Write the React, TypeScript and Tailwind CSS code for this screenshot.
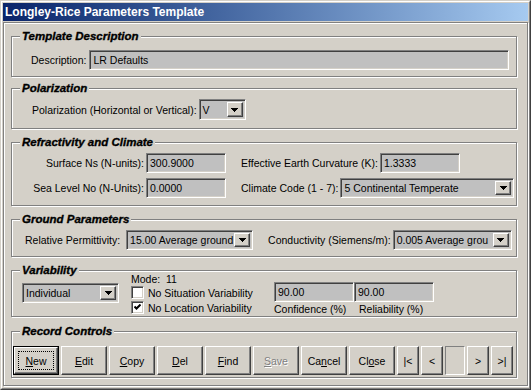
import React from "react";

const sunken =
  "border border-t-[#808080] border-l-[#808080] border-b-white border-r-white shadow-[inset_1px_1px_0_#404040,inset_-1px_-1px_0_#d4d0c8]";
const raised =
  "border border-t-white border-l-white border-b-[#404040] border-r-[#404040] shadow-[inset_-1px_-1px_0_#808080]";

function Field({ value, className }: { value: string; className: string }) {
  return (
    <div className={`${sunken} bg-[#c0c0c0] flex items-center pl-[3px] whitespace-nowrap overflow-hidden shrink-0 ${className}`}>
      {value}
    </div>
  );
}

function Arrow() {
  return (
    <svg width="7" height="4" viewBox="0 0 7 4" shapeRendering="crispEdges">
      <polygon points="0,0 7,0 3.5,4" fill="#000" />
    </svg>
  );
}

function Select({ value, className }: { value: string; className: string }) {
  return (
    <div className={`${sunken} bg-[#c0c0c0] flex items-center p-[2px] shrink-0 ${className}`}>
      <span className="flex-1 pl-[1px] whitespace-nowrap overflow-hidden">{value}</span>
      <span className={`${raised} bg-[#d4d0c8] w-[16px] h-full flex items-center justify-center`}>
        <Arrow />
      </span>
    </div>
  );
}

function Check({ checked }: { checked?: boolean }) {
  return (
    <span className={`${sunken} bg-white w-[13px] h-[13px] flex items-center justify-center shrink-0`}>
      {checked && (
        <svg width="7" height="7" viewBox="0 0 7 7">
          <polyline points="0.5,2.5 2.5,4.5 6.5,0.5" fill="none" stroke="#000" strokeWidth="2" />
        </svg>
      )}
    </span>
  );
}

function Group({
  title,
  className,
  children,
}: {
  title: string;
  className: string;
  children: React.ReactNode;
}) {
  return (
    <div
      className={`relative ml-[7px] w-[506px] shrink-0 border border-[#808080] shadow-[inset_1px_1px_0_#fff,1px_1px_0_#fff] ${className}`}
    >
      <span className="absolute left-[8px] -top-[8px] bg-[#d4d0c8] px-[2px] font-bold italic text-[11.5px] leading-[14px] [-webkit-text-stroke:0.35px_#000]">
        {title}
      </span>
      {children}
    </div>
  );
}

function Btn({
  children,
  className,
  def,
  disabled,
}: {
  children: React.ReactNode;
  className: string;
  def?: boolean;
  disabled?: boolean;
}) {
  const text = disabled
    ? "text-[#808080] [text-shadow:1px_1px_0_#fff]"
    : "text-black";
  if (def) {
    return (
      <div className={`border border-black h-[29px] ${className}`}>
        <div className={`${raised} bg-[#d4d0c8] w-full h-full flex items-center justify-center p-[3px]`}>
          <div className="w-full h-full border border-dotted border-black flex items-center justify-center">
            <span className={text}>{children}</span>
          </div>
        </div>
      </div>
    );
  }
  return (
    <div className={`${raised} bg-[#d4d0c8] h-[29px] flex items-center justify-center ${className}`}>
      <span className={text}>{children}</span>
    </div>
  );
}

export default function App() {
  return (
    <div className="w-[531px] h-[390px] bg-[#d4d0c8] border border-t-[#d4d0c8] border-l-[#d4d0c8] border-b-[#404040] border-r-[#404040] font-['Liberation_Sans',Arial,sans-serif] text-[10.5px] text-black leading-[12px] whitespace-nowrap select-none">
      <div className="h-full border border-t-white border-l-white border-b-[#808080] border-r-[#808080] p-[1px] flex flex-col">
        <div className="h-[18px] shrink-0 bg-gradient-to-r from-[#0a246a] to-[#a6caf0] flex items-center pl-[2px]">
          <span className="text-white font-bold text-[12px] leading-[14px]">Longley-Rice Parameters Template</span>
        </div>
        <div className="flex-1 mt-[1px] mb-[1px] border border-[#808080] shadow-[inset_1px_1px_0_#fff,1px_1px_0_#fff] flex flex-col">
          <Group title="Template Description" className="mt-[13px] h-[41px]">
            <div className="flex items-center pt-[13px] pl-[19px]">
              <span className="mr-[3px]">Description:</span>
              <Field value="LR Defaults" className="h-[20px] w-[420px]" />
            </div>
          </Group>

          <Group title="Polarization" className="mt-[11px] h-[41px]">
            <div className="flex items-center pt-[10px] pl-[20px]">
              <span className="mr-[2px]">Polarization (Horizontal or Vertical):</span>
              <Select value="V" className="h-[21px] w-[47px]" />
            </div>
          </Group>

          <Group title="Refractivity and Climate" className="mt-[13px] h-[64px]">
            <div className="flex items-center pt-[10px]">
              <span className="w-[132px] shrink-0 text-right mr-[2px]">Surface Ns (N-units):</span>
              <Field value="300.9000" className="h-[20px] w-[80px]" />
              <span className="ml-[15px] mr-[2px]">Effective Earth Curvature (K):</span>
              <Field value="1.3333" className="h-[20px] w-[80px]" />
            </div>
            <div className="flex items-center mt-[5px]">
              <span className="w-[132px] shrink-0 text-right mr-[2px]">Sea Level No (N-Units):</span>
              <Field value="0.0000" className="h-[20px] w-[80px]" />
              <span className="ml-[15px] mr-[2px]">Climate Code (1 - 7):</span>
              <Select value="5 Continental Temperate" className="h-[20px] w-[174px]" />
            </div>
          </Group>

          <Group title="Ground Parameters" className="mt-[13px] h-[38px]">
            <div className="flex items-center pt-[10px] pl-[13px]">
              <span className="mr-[6px]">Relative Permittivity:</span>
              <Select value="15.00 Average ground" className="h-[20px] w-[127px]" />
              <span className="ml-[15px] mr-[2px]">Conductivity (Siemens/m):</span>
              <Select value="0.005 Average grou" className="h-[20px] w-[119px]" />
            </div>
          </Group>

          <Group title="Variability" className="mt-[13px] h-[47px]">
            <div className="flex">
              <Select value="Individual" className="ml-[10px] mt-[12px] w-[97px] h-[20px]" />
              <div className="ml-[12px] w-[143px] shrink-0 flex flex-col">
                <div className="h-[14px] leading-[14px] pt-[1px]">Mode:&nbsp;&nbsp;11</div>
                <div className="flex items-center h-[15px] gap-[4px]">
                  <Check />
                  <span>No Situation Variability</span>
                </div>
                <div className="flex items-center h-[15px] gap-[4px]">
                  <Check checked />
                  <span>No Location Variability</span>
                </div>
              </div>
              <div className="mt-[11px] flex flex-col">
                <div className="flex">
                  <Field value="90.00" className="h-[20px] w-[80px]" />
                  <Field value="90.00" className="h-[20px] w-[80px]" />
                </div>
                <div className="flex leading-[12px] mt-[1px]">
                  <span className="w-[85px]">Confidence (%)</span>
                  <span>Reliability (%)</span>
                </div>
              </div>
            </div>
          </Group>

          <Group title="Record Controls" className="mt-[14px] h-[47px]">
            <div className="flex items-center gap-[2px] pt-[14px] pl-[1px]">
              <Btn def className="w-[46px]"><u>N</u>ew</Btn>
              <Btn className="w-[46px]"><u>E</u>dit</Btn>
              <Btn className="w-[46px]"><u>C</u>opy</Btn>
              <Btn className="w-[46px]"><u>D</u>el</Btn>
              <Btn className="w-[46px]"><u>F</u>ind</Btn>
              <Btn disabled className="w-[46px]"><u>S</u>ave</Btn>
              <Btn className="w-[46px]">Ca<u>n</u>cel</Btn>
              <Btn className="w-[46px]">Cl<u>o</u>se</Btn>
              <Btn className="w-[22px]">|&lt;</Btn>
              <Btn className="w-[22px]">&lt;</Btn>
              <div className="w-[20px] h-[29px] border border-t-[#808080] border-l-[#808080] border-b-white border-r-white bg-[#d4d0c8]" />
              <Btn className="w-[22px]">&gt;</Btn>
              <Btn className="w-[22px]">&gt;|</Btn>
            </div>
          </Group>
        </div>
      </div>
    </div>
  );
}
